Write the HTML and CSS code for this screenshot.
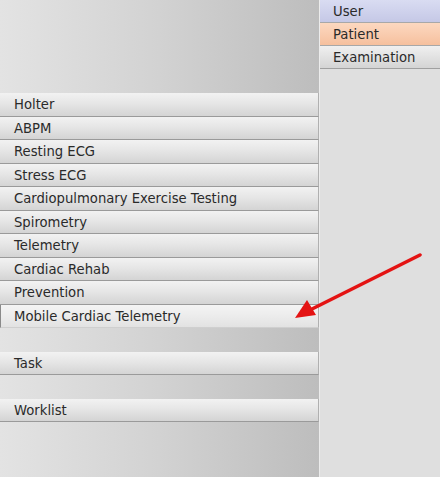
FILE: index.html
```html
<!DOCTYPE html>
<html>
<head>
<meta charset="utf-8">
<link rel="stylesheet" href="styles.css">
</head>
<body>
<div class="screen">
  <div class="left">
    <div class="top-space"></div>
    <div class="btn">Holter</div>
    <div class="btn">ABPM</div>
    <div class="btn">Resting ECG</div>
    <div class="btn">Stress ECG</div>
    <div class="btn">Cardiopulmonary Exercise Testing</div>
    <div class="btn">Spirometry</div>
    <div class="btn">Telemetry</div>
    <div class="btn">Cardiac Rehab</div>
    <div class="btn">Prevention</div>
    <div class="btn selected">Mobile Cardiac Telemetry</div>
    <div class="spacer"></div>
    <div class="btn">Task</div>
    <div class="spacer"></div>
    <div class="btn">Worklist</div>
  </div>
  <div class="right">
    <div class="tab user">User</div>
    <div class="tab patient">Patient</div>
    <div class="tab exam">Examination</div>
  </div>
  <svg class="arrow" width="440" height="477" viewBox="0 0 440 477">
    <line x1="420" y1="255" x2="312" y2="309" stroke="#e41414" stroke-width="3.5" stroke-linecap="round"/>
    <polygon points="295,318 307,300 316,315" fill="#e41414"/>
  </svg>
</div>
</body>
</html>
```
FILE: styles.css
```css
html, body {
  margin: 0;
  padding: 0;
}
body {
  font-family: "DejaVu Sans", Verdana, sans-serif;
  font-size: 13.2px;
  color: #2a2a2a;
}
.screen {
  position: relative;
  width: 440px;
  height: 477px;
  display: flex;
  overflow: hidden;
}
.left {
  width: 319px;
  height: 477px;
  background: linear-gradient(to right, #e3e3e3 0%, #d2d2d2 50%, #bdbdbd 100%);
  display: flex;
  flex-direction: column;
}
.top-space {
  height: 93px;
  flex: none;
}
.btn {
  flex: none;
  box-sizing: border-box;
  height: 23.5px;
  padding-left: 14px;
  line-height: 24px;
  background: linear-gradient(to bottom, #f2f2f2 0%, #e6e6e6 45%, #d4d4d4 100%);
  border-bottom: 1.5px solid #9a9a9a;
  border-right: 1px solid #b0b0b0;
}
.btn.selected {
  background: linear-gradient(to bottom, #f4f4f4 0%, #ececec 50%, #e2e2e2 100%);
  border-left: 1px solid #8a8a8a;
  padding-left: 13px;
  border-bottom: 1px solid #cfcfcf;
}
.spacer {
  flex: none;
  height: 23.5px;
}
.right {
  width: 121px;
  height: 477px;
  background: #dfdfdf;
  border-left: 1px solid #ececec;
  box-sizing: border-box;
}
.tab {
  box-sizing: border-box;
  height: 23px;
  padding-left: 13px;
  line-height: 23px;
  border-bottom: 1px solid #a8a8a8;
}
.tab.user {
  background: linear-gradient(to bottom, #d9dcf2 0%, #c5c8e6 100%);
}
.tab.patient {
  background: linear-gradient(to bottom, #fcd8c0 0%, #f6c09e 100%);
}
.tab.exam {
  background: linear-gradient(to bottom, #f0f0f0 0%, #d4d4d4 100%);
  border-bottom: 1px solid #a0a0a0;
}
.arrow {
  position: absolute;
  left: 0;
  top: 0;
  pointer-events: none;
}
```
